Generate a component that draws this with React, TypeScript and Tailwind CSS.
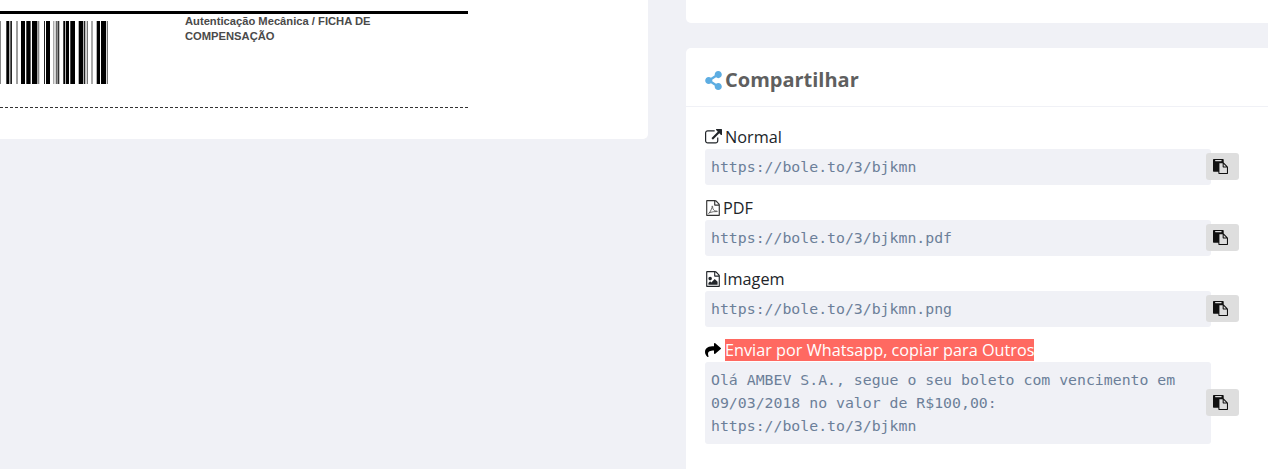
import { FaShareAlt, FaShare } from "react-icons/fa";
import type { ReactNode } from "react";

const bars: [number, number, string][] = [
  [0, 1, "#888"], [6.3, 3, "#000"], [10.3, 1.7, "#222"], [16.3, 1.4, "#777"],
  [21, 4, "#000"], [26.3, 4.3, "#000"], [32, 5.3, "#000"], [37.7, 1.6, "#888"],
  [44, 1, "#222"], [46, 4, "#000"], [53.3, 1, "#888"], [55.7, 1.6, "#666"], [57.6, 1.7, "#333"],
  [63.3, 2, "#000"], [66, 3, "#000"], [70.3, 4.7, "#000"], [78.7, 4.6, "#000"],
  [84, 1.3, "#222"], [86.7, 1.3, "#777"], [91.3, 1.4, "#888"], [96.7, 3.3, "#000"],
  [101, 5, "#000"], [106.7, 1.3, "#777"],
];

const fileBody =
  "M1596 380q28 28 48 76t20 88v1152q0 40-28 68t-68 28h-1344q-40 0-68-28t-28-68v-1600q0-40 28-68t68-28h896q40 0 88 20t76 48zm-444-244v376h376q-10-29-22-41l-313-313q-12-12-41-22zm384 1528v-1024h-416q-40 0-68-28t-28-68v-416h-768v1536h1280z";

function Fa({ size, children, className }: { size: number; children: ReactNode; className?: string }) {
  return (
    <svg width={size} height={size} viewBox="0 0 1792 1792" fill="currentColor" className={className}>
      {children}
    </svg>
  );
}

const LinkIcon = () => (
  <Fa size={17}>
    <path d="M1408 928v320q0 119-84.5 203.5t-203.5 84.5h-832q-119 0-203.5-84.5t-84.5-203.5v-832q0-119 84.5-203.5t203.5-84.5h704q14 0 23 9t9 23v64q0 14-9 23t-23 9h-704q-66 0-113 47t-47 113v832q0 66 47 113t113 47h832q66 0 113-47t47-113v-320q0-14 9-23t23-9h64q14 0 23 9t9 23zm384-864v512q0 26-19 45t-45 19-45-19l-176-176-652 652q-10 10-23 10t-23-10l-114-114q-10-10-10-23t10-23l652-652-176-176q-19-19-19-45t19-45 45-19h512q26 0 45 19t19 45z" />
  </Fa>
);

const PdfIcon = () => (
  <Fa size={16} className="text-[#333]">
    <path d={fileBody} />
    <path
      d="M400 1500C520 1440 720 1100 800 800C780 720 780 660 820 660C870 680 840 840 900 1000C970 1160 1120 1240 1300 1240C1420 1240 1420 1310 1300 1300C1080 1280 800 1320 560 1400C480 1430 400 1500 400 1500Z"
      fill="none"
      stroke="currentColor"
      strokeWidth="80"
    />
  </Fa>
);

const ImageIcon = () => (
  <Fa size={16}>
    <path d={fileBody + "m-128-448v320h-1024v-192l192-192 128 128 384-384zm-832-192q-80 0-136-56t-56-136 56-136 136-56 136 56 56 136-56 136-136 56z"} />
  </Fa>
);

const PasteIcon = () => (
  <Fa size={15}>
    <path d="M768 1664h896v-640h-416q-40 0-68-28t-28-68v-416h-384v1152zm256-1440v-64q0-13-9.5-22.5t-22.5-9.5h-704q-13 0-22.5 9.5t-9.5 22.5v64q0 13 9.5 22.5t22.5 9.5h704q13 0 22.5-9.5t9.5-22.5zm256 672h299l-299-299v299zm512 128v672q0 40-28 68t-68 28h-960q-40 0-68-28t-28-68v-160h-544q-40 0-68-28t-28-68v-1344q0-40 28-68t68-28h1088q40 0 68 28t28 68v328q21 13 36 28l408 408q28 28 48 76t20 88z" />
  </Fa>
);

function Row({ icon, label, children, hl, iw }: { icon: ReactNode; label: string; children: ReactNode; hl?: boolean; iw: string }) {
  return (
    <div className="mb-[11px]">
      <div className="flex items-center h-[24px] text-[16.25px] text-[#212529]">
        <span className={iw + " flex items-center shrink-0"}>{icon}</span>
        {hl ? <span className="bg-[#ff6961] text-white leading-[22px]">{label}</span> : <span>{label}</span>}
      </div>
      <div className="flex items-center w-[534px]">
        <div className="w-[506px] shrink-0 bg-[#f0f1f6] rounded-[3px] px-[6px] pt-[6px] pb-[7px] font-['DejaVu_Sans_Mono',monospace] text-[14.83px] leading-[23px] text-[#6c7f99]">
          {children}
        </div>
        <button className="relative -ml-[5px] mb-[1px] w-[33px] h-[27px] bg-[#dedede] rounded-[3px] flex items-center pl-[7px] text-[#111]">
          <PasteIcon />
        </button>
      </div>
    </div>
  );
}

export default function App() {
  return (
    <div className="w-[1268px] h-[469px] overflow-hidden bg-[#f0f1f6] flex font-['Open_Sans',sans-serif]">
      <div className="w-[648px] shrink-0">
        <div className="h-[139px] bg-white rounded-br-[5px] pt-[11px]">
          <div className="w-[468px]">
            <div className="h-[2.5px] bg-black" />
            <div className="flex h-[94.5px] border-b border-dashed border-[#333]">
              <svg width="108" height="63" viewBox="0 0 108 63" className="mt-[7.5px] shrink-0">
                {bars.map(([x, w, c], i) => (
                  <rect key={i} x={x} y="0" width={w} height="63" fill={c} />
                ))}
              </svg>
              <div className="ml-[77px] w-[200px] font-['Liberation_Sans',sans-serif] font-bold text-[11.2px] leading-[15px] text-[#4a4a4a]">
                Autenticação Mecânica / FICHA DE COMPENSAÇÃO
              </div>
            </div>
          </div>
        </div>
      </div>
      <div className="ml-[38px] flex-1 flex flex-col gap-[25px]">
        <div className="h-[23px] bg-white rounded-bl-[5px]" />
        <div className="flex-1 bg-white rounded-tl-[5px]">
          <div className="h-[59px] border-b border-[#f0f1f6] flex items-center pt-[6px] pl-[18px] text-[20px] font-bold text-[#5f5f5f]">
            <FaShareAlt size={19} className="text-[#5dade2] mr-[2px]" />
            Compartilhar
          </div>
          <div className="pl-[19px] pt-[18px]">
            <Row iw="w-[20px]" icon={<LinkIcon />} label="Normal">https://bole.to/3/bjkmn</Row>
            <Row iw="w-[18px]" icon={<PdfIcon />} label="PDF">https://bole.to/3/bjkmn.pdf</Row>
            <Row iw="w-[18px]" icon={<ImageIcon />} label="Imagem">https://bole.to/3/bjkmn.png</Row>
            <Row iw="w-[20px]" icon={<FaShare size={16} className="text-black" />} label="Enviar por Whatsapp, copiar para Outros" hl>
              Olá AMBEV S.A., segue o seu boleto com vencimento em
              <br />
              09/03/2018 no valor de R$100,00:
              <br />
              https://bole.to/3/bjkmn
            </Row>
          </div>
        </div>
      </div>
    </div>
  );
}
